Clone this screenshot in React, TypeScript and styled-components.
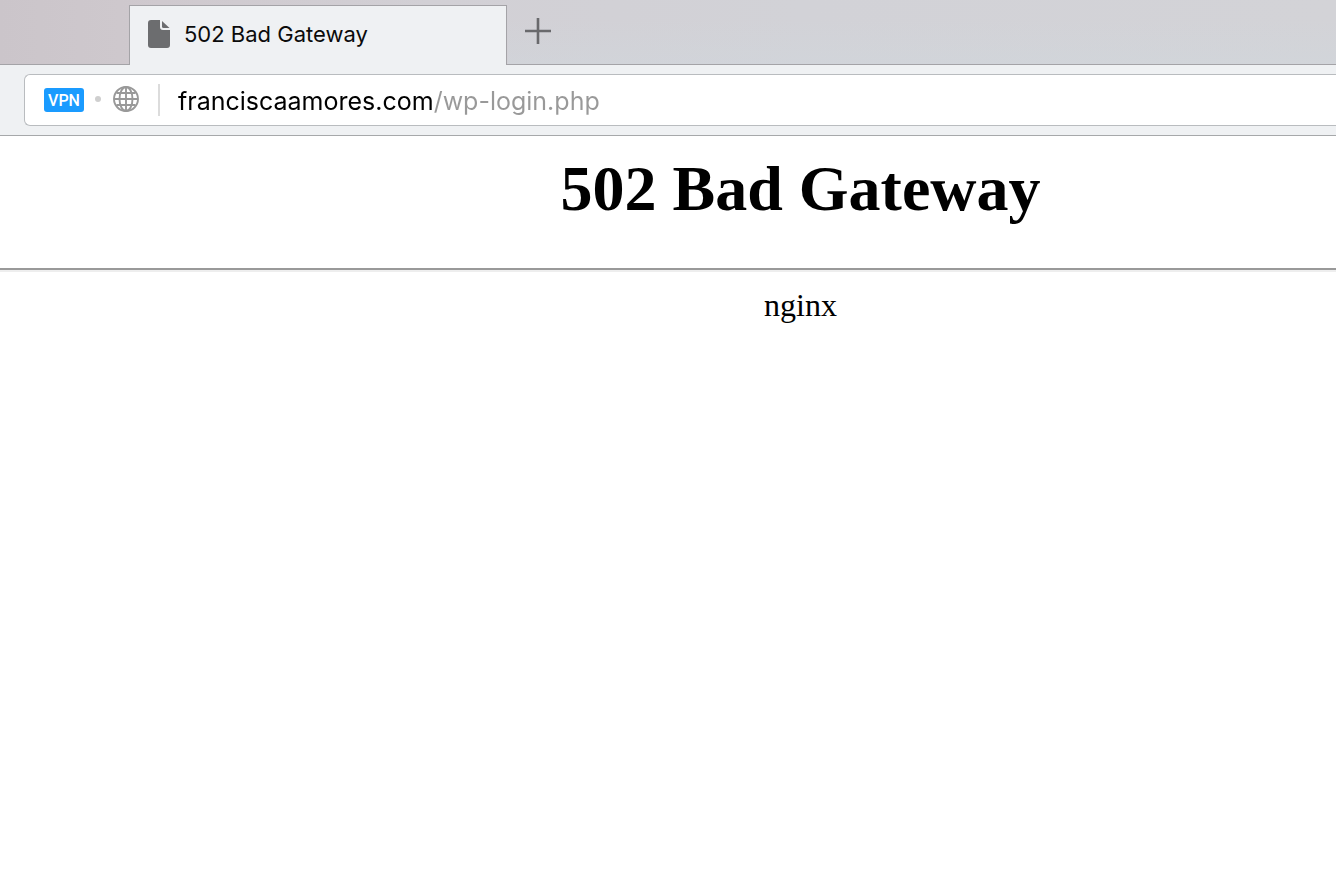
import React, { useState } from 'react';
import styled, { createGlobalStyle } from 'styled-components';

const GlobalStyle = createGlobalStyle`
  *, *::before, *::after { box-sizing: border-box; }
  html, body { margin: 0; background: #fff; }
  body { overflow-x: hidden; }
`;

const uiFont = `Inter, "Liberation Sans", sans-serif`;

const Browser = styled.div`
  min-height: 100vh;
  overflow: hidden;
  display: flex;
  flex-direction: column;
  font-family: ${uiFont};
`;

const TabStrip = styled.nav`
  display: flex;
  height: 65px;
  background:
    linear-gradient(to bottom, rgba(208, 216, 222, 0) 30%, rgba(208, 216, 222, 0.4)) right / 62% 100% no-repeat,
    linear-gradient(to right, #cbc5ca 0%, #cfc9ce 12%, #d2d0d5 32%, #d2d2d7 60%, #d3d3d7 100%);
`;

const StripEdge = styled.div<{ $grow?: boolean }>`
  flex: ${(p) => (p.$grow ? '1 1 auto' : '0 0 129px')};
  border-bottom: 1px solid #a4a3a7;
`;

const Tab = styled.button`
  display: flex;
  align-items: center;
  gap: 14px;
  width: 378px;
  margin: 5px 0 0;
  padding: 0 18px 4px;
  border: 1px solid #a4a3a7;
  border-bottom: 0;
  border-radius: 0;
  background: #eff1f3;
  color: #0b0b0b;
  font: 400 22px/28px ${uiFont};
  text-align: left;
`;

const NewTab = styled.button`
  display: flex;
  align-items: center;
  justify-content: center;
  width: 62px;
  padding: 0 0 2px;
  border: 0;
  border-bottom: 1px solid #a4a3a7;
  background: transparent;
`;

const Toolbar = styled.header`
  padding: 9px 0 9px 24px;
  background: #eff1f3;
  border-bottom: 1px solid #a6a8aa;
`;

const AddressBar = styled.form`
  display: flex;
  align-items: center;
  height: 52px;
  padding-left: 19px;
  background: #fff;
  border: 1px solid #b9bcbf;
  border-right: 0;
  border-radius: 6px 0 0 6px;
`;

const VpnBadge = styled.button`
  width: 40px;
  height: 24px;
  padding: 1px 0 0;
  border: 0;
  border-radius: 3px;
  background: #1a9bff;
  color: #fff;
  font: 500 16px/23px Roboto, sans-serif;
  text-align: center;
`;

const Dot = styled.span`
  width: 6px;
  height: 6px;
  margin: 0 12px 2px 11px;
  border-radius: 50%;
  background: #cfcfcf;
`;

const SiteInfo = styled.button`
  display: flex;
  padding: 0 0 2px;
  border: 0;
  background: transparent;
`;

const Divider = styled.span`
  width: 2px;
  height: 32px;
  margin: 0 18px 0 19px;
  background: #dcdcdc;
`;

/* The host is painted black and the path after it grey. */
const UrlInput = styled.input`
  flex: 1;
  min-width: 0;
  height: 36px;
  padding: 2px 0 0;
  border: 0;
  outline: 0;
  font: 400 25px/34px ${uiFont};
  background: linear-gradient(to right, #000 256px, #999 256px);
  background-clip: text;
  -webkit-background-clip: text;
  -webkit-text-fill-color: transparent;
  caret-color: #000;
`;

/* The document is wider than the visible part of the window. */
const Page = styled.main`
  width: calc(100% + 265px);
  color: #000;
  font-family: "Liberation Serif", "Times New Roman", serif;
  text-align: center;
`;

const Title = styled.h1`
  margin: 16px 0 42px;
  font-size: 64px;
  line-height: 74px;
  font-weight: 700;
`;

const Rule = styled.hr`
  height: 4px;
  margin: 0;
  border: 0;
  border-top: 2px solid #999;
  border-bottom: 2px solid #eee;
`;

const Server = styled.p`
  margin: 15px 0 0;
  font-size: 32px;
  line-height: 36px;
`;

function PageIcon() {
  return (
    <svg width="22" height="28" viewBox="0 0 22 28" fill="#6c6d6f" aria-hidden="true">
      <path d="M3 0H12V7Q12 10 15 10H22V25Q22 28 19 28H3Q0 28 0 25V3Q0 0 3 0Z" />
      <path d="M14 1L21.500 8H15.500Q14 8 14 6.500Z" />
    </svg>
  );
}

function PlusIcon() {
  return (
    <svg width="26" height="26" viewBox="0 0 26 26" fill="none" stroke="#69696c" strokeWidth="2.600" aria-hidden="true">
      <path d="M13 0V26M0 13H26" />
    </svg>
  );
}

function GlobeIcon() {
  return (
    <svg width="26" height="26" viewBox="0 0 26 26" fill="none" stroke="#999" strokeWidth="1.900" aria-hidden="true">
      <circle cx="13" cy="13" r="12" />
      <ellipse cx="13" cy="13" rx="6.500" ry="12" />
      <path d="M13 1V25M1 13H25M3.500 7H22.500M3.500 19H22.500" />
    </svg>
  );
}

export default function App() {
  const [url, setUrl] = useState('franciscaamores.com/wp-login.php');
  return (
    <Browser>
      <GlobalStyle />
      <TabStrip aria-label="Tabs">
        <StripEdge />
        <Tab type="button">
          <PageIcon />
          <span>502 Bad Gateway</span>
        </Tab>
        <NewTab type="button" aria-label="New tab">
          <PlusIcon />
        </NewTab>
        <StripEdge $grow />
      </TabStrip>
      <Toolbar>
        <AddressBar onSubmit={(e) => e.preventDefault()}>
          <VpnBadge type="button">VPN</VpnBadge>
          <Dot />
          <SiteInfo type="button" aria-label="Site information">
            <GlobeIcon />
          </SiteInfo>
          <Divider />
          <UrlInput
            aria-label="Address"
            type="text"
            spellCheck={false}
            value={url}
            onChange={(e) => setUrl(e.target.value)}
          />
        </AddressBar>
      </Toolbar>
      <Page>
        <Title>502 Bad Gateway</Title>
        <Rule />
        <Server>nginx</Server>
      </Page>
    </Browser>
  );
}
